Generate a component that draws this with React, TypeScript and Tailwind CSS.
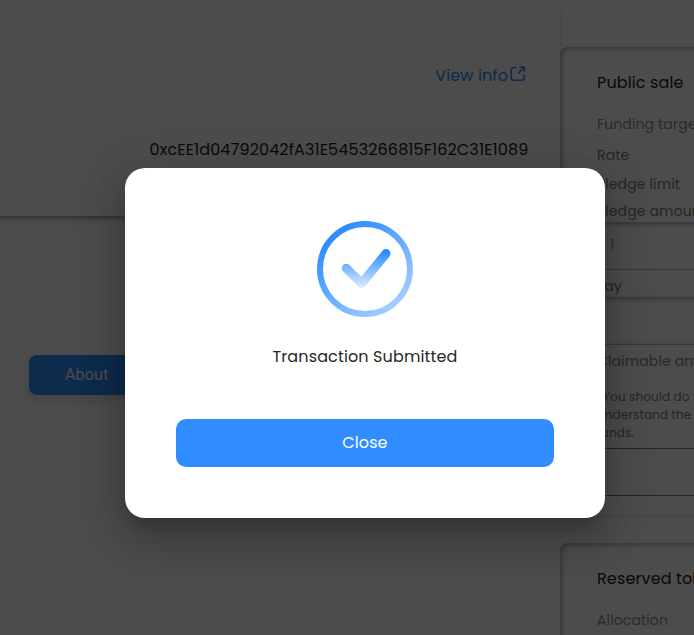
import React from "react";

const fontFamily =
  "font-['Poppins','Inter',sans-serif] antialiased";

function ExternalLinkIcon() {
  return (
    <svg className="mb-[2px]" width="16" height="16" viewBox="0 0 16 16" fill="none" stroke="#2f8dfd" strokeWidth="1.5">
      <path d="M6.6 1.5H4A2.8 2.8 0 0 0 1.2 4.3v7.2A2.8 2.8 0 0 0 4 14.3h7.5a2.8 2.8 0 0 0 2.8-2.8V8.6" />
      <path d="M8.2 7.4 13.8 1.8" />
      <path d="M9.5 1.3h4.8v4.9" />
    </svg>
  );
}

function SuccessIcon() {
  return (
    <svg width="96" height="96" viewBox="0 0 96 96" fill="none">
      <defs>
        <linearGradient id="ring" x1="18" y1="16" x2="78" y2="92" gradientUnits="userSpaceOnUse">
          <stop stopColor="#308dff" />
          <stop offset="1" stopColor="#a9d1ff" />
        </linearGradient>
        <linearGradient id="tick" x1="48" y1="29" x2="48" y2="68" gradientUnits="userSpaceOnUse">
          <stop stopColor="#2387fd" />
          <stop offset="1" stopColor="#e4f1ff" />
        </linearGradient>
      </defs>
      <circle cx="48" cy="48" r="45" stroke="url(#ring)" strokeWidth="6" />
      <path
        d="M29.2 47.3 44.8 62.4 69 32.6"
        stroke="url(#tick)"
        strokeWidth="9"
        strokeLinecap="round"
        strokeLinejoin="round"
      />
    </svg>
  );
}

function Page() {
  return (
    <div className="flex h-full w-[960px] bg-white tracking-[0.13px]">
      <div className="w-[560px] shrink-0">
        <div className="-ml-5 h-[216px] pl-5 shadow-[0_5px_6px_-3px_rgba(75,105,150,0.7)]">
          <div className="flex h-[150px] justify-end pt-[63px] pr-[34px]">
            <div className="flex h-6 items-center gap-[2px] text-[#2f8dfd]">
              <span className="pt-[2px] text-base whitespace-nowrap tracking-[0.1px]">View info</span>
              <ExternalLinkIcon />
            </div>
          </div>
          <div className="-mt-[12px] ml-[149.5px] h-6 text-base leading-6 tracking-[0.13px] whitespace-nowrap text-[#222222]">
            0xcEE1d04792042fA31E5453266815F162C31E1089
          </div>
        </div>
        <div className="mt-[9px] h-px bg-[#f2f2f2]" />
        <button className="mt-[129px] ml-[29px] block h-10 w-[160px] rounded-lg bg-[#2f8dfd] pl-9 text-left font-['Roboto',sans-serif] text-base text-white shadow-[0_6px_14px_rgba(0,0,0,0.12)]">
          About
        </button>
      </div>
      <div className="w-[400px] pt-[47px]">
        <div className="h-[471px] rounded-tl-lg border-b border-[#eeeeee] shadow-[inset_2px_2px_5px_rgba(75,110,150,0.5)]">
          <div className="h-[175px] pt-[24px] pl-[37px] whitespace-nowrap">
            <h2 className="h-6 text-base leading-6 text-[#222222]">Public sale</h2>
            <p className="mt-[19px] h-5 text-sm leading-5 text-[#8c8c8c]">Funding target</p>
            <p className="mt-[11px] h-5 text-sm leading-5 text-[#7c7c7c]">Rate</p>
            <p className="mt-[9px] h-5 text-sm leading-5 text-[#7c7c7c]">Pledge limit</p>
            <p className="mt-[7px] h-5 text-sm leading-5 text-[#7c7c7c]">Pledge amount</p>
          </div>
          <div className="ml-6 h-[75px] shadow-[inset_0_2px_5px_rgba(75,100,130,0.5)]">
            <div className="h-[48px] border-b border-[#bbbbbb] pt-[13px] pl-[26px] text-sm leading-5 text-[#aaaaaa]">1</div>
            <p className="pt-[6px] pl-[12px] text-sm leading-5 text-[#7c7c7c]">Pay</p>
          </div>
          <div className="ml-6 h-[48px] border-b border-[#bbbbbb] shadow-[inset_0_2px_5px_rgba(75,100,130,0.5)]" />
          <div className="h-[103px] pt-[6px] pl-[37px] whitespace-nowrap">
            <p className="h-5 text-sm leading-5 text-[#888888]">Claimable amount</p>
            <div className="mt-[17px] text-xs leading-[18px] text-[#808080]">
              <p>*You should do what you can to</p>
              <p>understand the risks before committing</p>
              <p>funds.</p>
            </div>
          </div>
          <div className="ml-6 h-12 border-y border-[#4a80c8]" />
        </div>
        <div className="mt-[25px] h-[160px] rounded-tl-lg pt-[24px] pl-[37px] whitespace-nowrap shadow-[inset_2px_2px_5px_rgba(75,110,150,0.5)]">
          <h2 className="h-6 text-base leading-6 text-[#222222]">Reserved tokens</h2>
          <p className="mt-[19px] text-sm leading-5 text-[#8c8c8c]">Allocation</p>
        </div>
      </div>
    </div>
  );
}

function TransactionDialog() {
  return (
    <div className="absolute inset-0 bg-black/70 pt-[168px] pl-[125px]">
      <div
        role="dialog"
        className="flex h-[350px] w-[480px] flex-col items-center rounded-[20px] bg-white pt-[53px] shadow-[0_11px_15px_-7px_rgba(0,0,0,0.2),0_24px_38px_3px_rgba(0,0,0,0.14),0_9px_46px_8px_rgba(0,0,0,0.12)]"
      >
        <SuccessIcon />
        <p className="mt-[28px] h-6 text-base leading-6 tracking-[0.13px] whitespace-nowrap text-[#262626]">Transaction Submitted</p>
        <button className="mt-[50px] h-12 w-[378px] rounded-[10px] bg-[#318dff] text-base tracking-[0.1px] text-white">Close</button>
      </div>
    </div>
  );
}

export default function App() {
  return (
    <div className={`relative h-[635px] w-[694px] overflow-hidden ${fontFamily}`}>
      <Page />
      <TransactionDialog />
    </div>
  );
}
